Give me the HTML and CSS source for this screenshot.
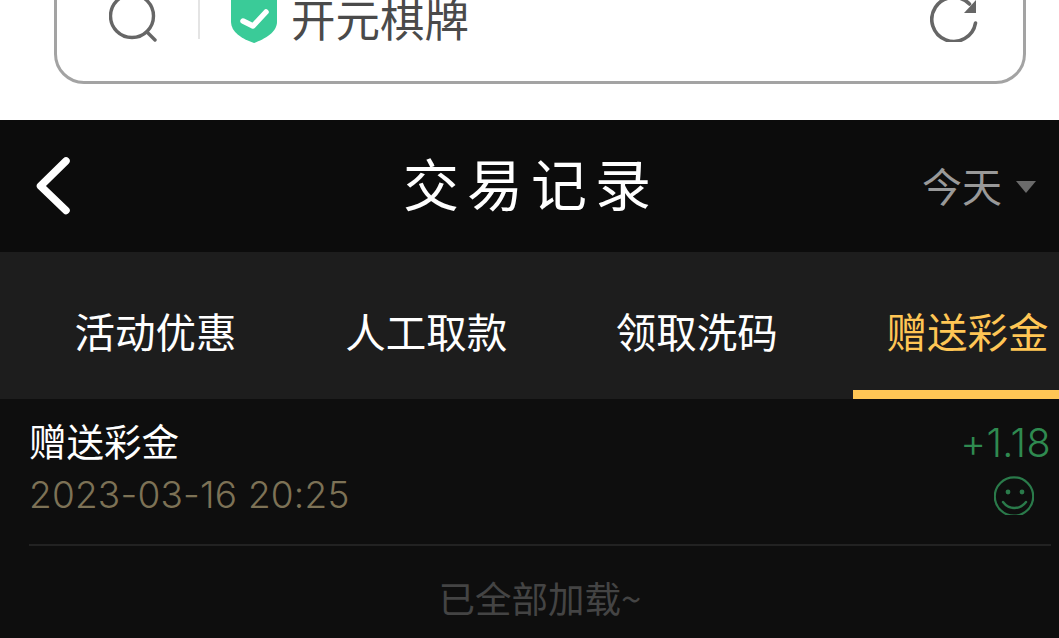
FILE: index.html
```html
<!DOCTYPE html>
<html lang="zh-CN">
  <head>
    <meta charset="UTF-8" />
    <meta name="viewport" content="width=device-width, initial-scale=1.0" />
    <title>交易记录</title>
    <link rel="stylesheet" href="styles.css">
  </head>
  <body>
    <div class="browser">
      <div class="urlbar">
        <svg class="icon-search" width="48" height="48" viewBox="0 0 48 48">
          <circle cx="23" cy="22" r="21.5" fill="none" stroke="#666" stroke-width="3.4"/>
          <path d="M38 38l8 8" fill="none" stroke="#666" stroke-width="3.4" stroke-linecap="round"/>
        </svg>
        <div class="sep"></div>
        <svg class="icon-shield" width="46" height="50" viewBox="0 0 46 50">
          <path d="M0 0h46v29c0 10-12 17-23 21C11 46 0 39 0 29z" fill="#3acb98"/>
          <path d="M12 28l10 5 13-14" fill="none" stroke="#fff" stroke-width="5.5" stroke-linecap="round" stroke-linejoin="round"/>
        </svg>
        <span class="site">开元棋牌</span>
        <svg class="icon-reload" width="48" height="48" viewBox="0 0 48 48">
          <path d="M45.5 29a22 22 0 1 1-6-19" fill="none" stroke="#666" stroke-width="3.6" stroke-linecap="round"/>
          <path d="M46 6v13H34z" fill="#666"/>
        </svg>
      </div>
    </div>

    <header class="topbar">
      <svg class="back" width="36" height="60" viewBox="0 0 36 60">
        <path d="M30 5L4.5 30 30 54.5" fill="none" stroke="#fff" stroke-width="7.5" stroke-linecap="round" stroke-linejoin="round"/>
      </svg>
      <h1>交易记录</h1>
      <div class="filter">今天<span class="caret"></span></div>
    </header>

    <nav class="tabs">
      <div class="tab">活动优惠</div>
      <div class="tab">人工取款</div>
      <div class="tab">领取洗码</div>
      <div class="tab active">赠送彩金</div>
    </nav>

    <main class="list">
      <div class="record">
        <div class="record-left">
          <div class="record-name">赠送彩金</div>
          <div class="record-date">2023-03-16 20:25</div>
        </div>
        <div class="record-right">
          <div class="record-amount">+1.18</div>
          <svg class="smile" width="40" height="39" viewBox="0 0 40 39">
            <circle cx="20" cy="20.5" r="19.2" fill="none" stroke="#2a7a4a" stroke-width="2.2"/>
            <circle cx="14" cy="16" r="2.4" fill="#2a7a4a"/>
            <circle cx="28" cy="16" r="2.4" fill="#2a7a4a"/>
            <path d="M9 26c6 8 17 8 23 0" fill="none" stroke="#2a7a4a" stroke-width="2.4" stroke-linecap="round"/>
          </svg>
        </div>
      </div>
      <div class="loaded">已全部加载~</div>
    </main>
  </body>
</html>
```

FILE: styles.css
```css
html,
body {
  margin: 0;
  height: 100%;
  overflow: hidden;
}

body {
  background-color: #0e0e0e;
  font-family: "Noto Sans CJK SC", "Inter", sans-serif;
}

.browser {
  height: 120px;
  background-color: #fff;
  overflow: hidden;
}

.urlbar {
  box-sizing: border-box;
  height: 124px;
  margin: -40px 33px 0 54px;
  padding: 0 45px 8px 52px;
  border: 3px solid #a3a3a3;
  border-radius: 30px;
  display: flex;
  align-items: center;
}

.icon-search,
.icon-shield,
.icon-reload {
  flex: none;
}

.sep {
  flex: none;
  width: 2px;
  height: 80px;
  margin: 0 31px 34px 41px;
  background-color: #e4e4e4;
  align-self: flex-end;
}

.site {
  margin-left: 14px;
  font-size: 44.5px;
  line-height: 1;
  color: #4a4a4a;
  flex: 1;
}

.topbar {
  height: 132px;
  background-color: #0c0c0c;
  display: grid;
  grid-template-columns: 1fr auto 1fr;
  align-items: center;
  padding: 0 23px 0 26px;
}

.back {
  margin-left: 10px;
}

.topbar h1 {
  margin: 0;
  padding-bottom: 10px;
  font-size: 56px;
  font-weight: 400;
  letter-spacing: 8px;
  color: #fff;
}

.filter {
  justify-self: end;
  display: flex;
  align-items: center;
  padding-bottom: 2px;
  font-size: 40px;
  color: #999;
}

.caret {
  width: 0;
  height: 0;
  margin-left: 14px;
  margin-top: 4px;
  border-left: 10px solid transparent;
  border-right: 10px solid transparent;
  border-top: 12px solid #6b6b6b;
}

.tabs {
  height: 147px;
  box-sizing: border-box;
  padding-left: 41px;
  background-color: #1d1d1d;
  display: flex;
  gap: 41.66px;
  overflow: hidden;
}

.tab {
  flex: none;
  box-sizing: border-box;
  width: 229px;
  padding-top: 10px;
  display: flex;
  align-items: center;
  justify-content: center;
  font-size: 40.5px;
  color: #fff;
  white-space: nowrap;
}

.tab.active {
  color: #ffc655;
  border-bottom: 9px solid #ffc655;
  padding-top: 19px;
}

.list {
  padding: 0 8px 0 29px;
}

.record {
  height: 147px;
  box-sizing: border-box;
  border-bottom: 2px solid #222;
  display: flex;
  justify-content: space-between;
}

.record-name {
  margin-top: 14px;
  font-size: 37.5px;
  line-height: 54px;
  color: #fff;
}

.record-date {
  margin-top: 3px;
  font-family: "Inter", sans-serif;
  font-size: 37px;
  font-weight: 300;
  letter-spacing: 0.2px;
  line-height: 50px;
  color: #7d7256;
}

.record-right {
  display: flex;
  flex-direction: column;
  align-items: flex-end;
}

.record-amount {
  margin-top: 17px;
  font-family: "Inter", sans-serif;
  font-size: 39.5px;
  font-weight: 300;
  letter-spacing: 0.4px;
  line-height: 54px;
  color: #2f8a50;
}

.smile {
  margin: 6px 17px 0 0;
}

.loaded {
  margin-top: 27px;
  font-size: 36.5px;
  line-height: 50px;
  text-align: center;
  color: #444;
}
```
